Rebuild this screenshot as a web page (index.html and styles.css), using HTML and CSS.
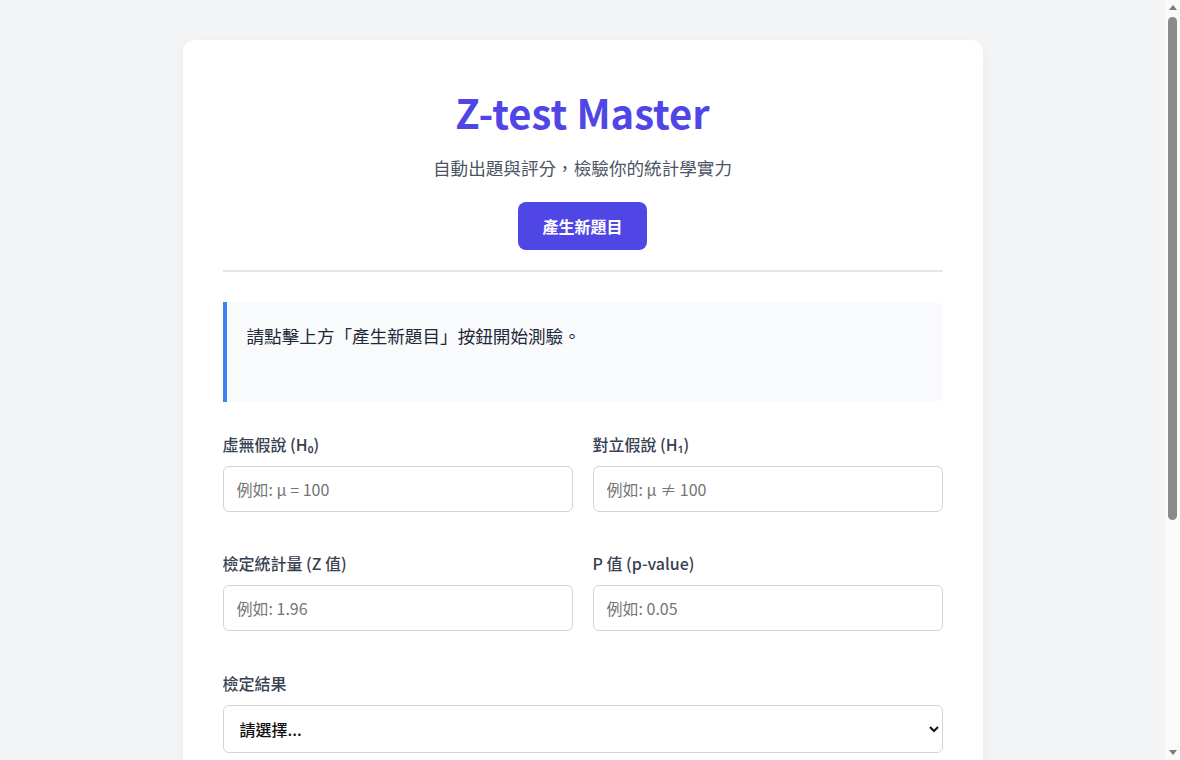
FILE: index.html
```html
<!DOCTYPE html>
<html lang="zh-Hant">
<head>
    <meta charset="UTF-8">
    <meta name="viewport" content="width=device-width, initial-scale=1.0">
    <title>Z-test Master</title>
    <link rel="stylesheet" href="styles.css">
</head>
<body>

    <div class="quiz-card">
        <!-- 標題區 -->
        <div class="quiz-header">
            <h1>Z-test Master</h1>
            <p class="subtitle">自動出題與評分，檢驗你的統計學實力</p>
            <button class="primary-button" id="new-question">產生新題目</button>
        </div>

        <!-- 題目顯示 -->
        <div class="question-box" id="question-box">
            請點擊上方「產生新題目」按鈕開始測驗。
        </div>

        <!-- 作答欄位 -->
        <div class="answer-grid">
            <div class="field">
                <label for="h0">虛無假說 (H₀)</label>
                <input type="text" id="h0" placeholder="例如: μ = 100">
            </div>
            <div class="field">
                <label for="h1">對立假說 (H₁)</label>
                <input type="text" id="h1" placeholder="例如: μ ≠ 100">
            </div>
            <div class="field">
                <label for="z-value">檢定統計量 (Z 值)</label>
                <input type="text" id="z-value" placeholder="例如: 1.96">
            </div>
            <div class="field">
                <label for="p-value">P 值 (p-value)</label>
                <input type="text" id="p-value" placeholder="例如: 0.05">
            </div>
        </div>

        <div class="field wide">
            <label for="decision">檢定結果</label>
            <select id="decision">
                <option value="">請選擇...</option>
                <option value="reject">拒絕虛無假說</option>
                <option value="keep">不拒絕虛無假說</option>
            </select>
        </div>

        <div class="field wide">
            <label for="conclusion">結論說明</label>
            <textarea id="conclusion" placeholder="請以文字說明你的結論"></textarea>
        </div>

        <button class="primary-button submit-button" id="submit">提交答案</button>
    </div>

    <!-- 捲軸 -->
    <div class="scrollbar" aria-hidden="true">
        <span class="scroll-arrow up"></span>
        <div class="scroll-track"><div class="scroll-thumb"></div></div>
        <span class="scroll-arrow down"></span>
    </div>

</body>
</html>
```

FILE: styles.css
```css
body {
    margin: 0 15px 0 0;
    font-family: "Noto Sans CJK TC", "Noto Sans", sans-serif;
    background-color: #f3f4f6;
    color: #1f2937;
}

/* 捲軸 */
.scrollbar {
    position: fixed;
    top: 0;
    right: 0;
    width: 15px;
    height: 100vh;
    display: flex;
    flex-direction: column;
    background-color: #fafafa;
}

.scroll-arrow {
    height: 15px;
    display: flex;
    justify-content: center;
    align-items: center;
}

.scroll-arrow::before {
    content: "";
    border-left: 4.5px solid transparent;
    border-right: 4.5px solid transparent;
}

.scroll-arrow.up::before {
    border-bottom: 5px solid #7a7a7a;
}

.scroll-arrow.down::before {
    border-top: 5px solid #7a7a7a;
}

.scroll-track {
    flex: 1;
    padding: 2px 3px;
}

.scroll-thumb {
    height: 503px;
    background-color: #8a8a8a;
    border-radius: 5px;
}

.quiz-card {
    width: 800px;
    box-sizing: border-box;
    margin: 40px auto;
    padding: 40px;
    background-color: white;
    border-radius: 12px;
    box-shadow: 0 4px 12px rgba(0, 0, 0, 0.05);
}

.quiz-header {
    text-align: center;
    padding-bottom: 20px;
    border-bottom: 2px solid #e5e7eb;
    margin-bottom: 30px;
}

.quiz-header h1 {
    margin: 0;
    font-size: 40px;
    line-height: 64px;
    color: #4f46e5;
}

.subtitle {
    margin: 10px 0 20px;
    font-size: 17.6px;
    line-height: 28px;
    color: #4b5563;
}

.primary-button {
    padding: 12px 24px;
    background-color: #4f46e5;
    color: white;
    border: none;
    border-radius: 8px;
    font-family: inherit;
    font-size: 16px;
    font-weight: bold;
    line-height: 24px;
    cursor: pointer;
}

.primary-button:hover {
    background-color: #4338ca;
}

.question-box {
    min-height: 60px;
    padding: 20px;
    background-color: #f8fafc;
    border-left: 4px solid #3b82f6;
    border-radius: 0 8px 8px 0;
    font-size: 17.6px;
    line-height: 1.6;
    color: #1f2937;
    margin-bottom: 30px;
}

.answer-grid {
    display: grid;
    grid-template-columns: 1fr 1fr;
    column-gap: 20px;
    row-gap: 39px;
}

.field {
    display: flex;
    flex-direction: column;
    gap: 10px;
}

.field.wide {
    margin-top: 40px;
}

.field label {
    font-size: 16px;
    font-weight: 500;
    color: #374151;
}

.field input,
.field select,
.field textarea {
    padding: 10px 13px;
    border: 1px solid #d1d5db;
    border-radius: 6px;
    font-family: inherit;
    font-size: 16px;
    box-sizing: border-box;
}

.field input {
    height: 46px;
}

.field input::placeholder,
.field textarea::placeholder {
    color: #757575;
}

.field select {
    height: 48px;
    padding-left: 12px;
    background-color: white;
    color: #111;
    font-weight: 500;
}

.field textarea {
    height: 100px;
    resize: vertical;
}

.submit-button {
    display: block;
    width: 100%;
    margin-top: 30px;
}
```
